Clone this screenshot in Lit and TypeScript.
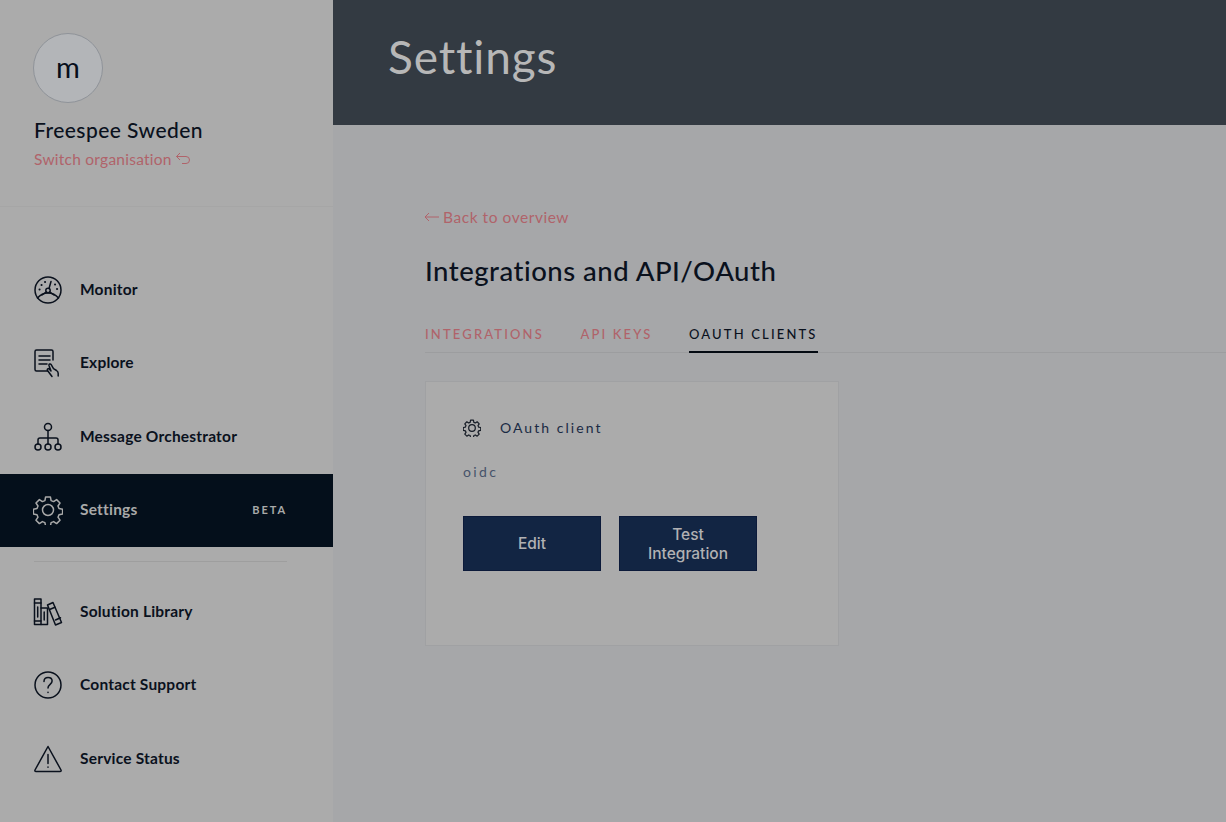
import { LitElement, html, css, svg } from "lit";
import { customElement } from "lit/decorators.js";

const ic = (body: unknown, size = 30, sw = 1.5) => html`<svg class="icon" width=${size} height=${size} viewBox="0 0 30 30" fill="none" stroke="currentColor" stroke-width=${sw} stroke-linecap="round" stroke-linejoin="round">${body}</svg>`;

const gearPath = svg`<path d="M12.6 2h4.800l.7 3.600 2.500 1 3-2 3.400 3.400-2 3 1 2.500 3.600.7v4.800l-3.600.7-1 2.500 2 3-3.400 3.400-3-2-2.500 1-.7 3.600h-4.800l-.7-3.600-2.500-1-3 2-3.400-3.400 2-3-1-2.500-3.600-.7v-4.800l3.600-.7 1-2.500-2-3 3.400-3.400 3 2 2.500-1z"/><circle cx="15" cy="15" r="5.500"/>`;

const icons = {
  monitor: ic(svg`<circle cx="15" cy="15" r="13"/><path d="M4.500 23c2.800-3.300 6.300-5 10.500-5s7.700 1.700 10.500 5"/><circle cx="15" cy="15.500" r="2.200"/><path d="M16 13.500 18 6.500"/><path d="M13.200 17 9 20M16.800 17 21 20"/><path d="M6.500 14.500h.1M8.500 10h.1M12 7h.1M22 9.500h.1M24 14h.1" stroke-width="2"/>`),
  explore: ic(svg`<path d="M14.500 23H3.500A1.500 1.500 0 0 1 2 21.500V3.500A1.500 1.500 0 0 1 3.500 2h15A1.500 1.500 0 0 1 20 3.500V12"/><path d="M6 8h11M6 12h11M6 16h8"/><path d="M19 28.500l-4.500-6c-.9-1.300.9-2.600 2-1.300l1.500 1.800-2-5.500c-.5-1.500 1.500-2 2.200-.8l2.300 4 3 1.800c1 .7 1.700 1.700 1.700 3V28"/>`),
  orchestrator: ic(svg`<circle cx="15" cy="5" r="3.500"/><path d="M15 8.500V22M15 16H7a2 2 0 0 0-2 2v4M15 16h8a2 2 0 0 1 2 2v4"/><circle cx="5" cy="25" r="3"/><circle cx="15" cy="25" r="3"/><circle cx="25" cy="25" r="3"/>`),
  gear: ic(gearPath),
  library: ic(svg`<rect x="1.500" y="2" width="6.500" height="25.500"/><path d="M1.500 6H8M1.500 24H8M4.700 10v10"/><path d="M8 11h6.500v16.500H8M11.200 15v8"/><path d="M14.500 8 20 5.500l8.500 20-6 2.500z"/><path d="M16.500 12.500l5.500-2.300M22.500 23l5-2.300"/>`),
  help: ic(svg`<circle cx="15" cy="15" r="13"/><path d="M11 11.500c0-2.400 1.800-4 4.100-4 2.300 0 4 1.500 4 3.600 0 3.300-4.100 3.400-4.100 7"/><path d="M15 22.300v.2"/>`),
  warning: ic(svg`<path d="M15 2.500 28 26c.4.800 0 1.500-1 1.500H3c-1 0-1.400-.7-1-1.500z"/><path d="M15 10.500v9M15 23v.3"/>`),
};

@customElement("app-root")
export class AppRoot extends LitElement {
  static styles = css`
    :host { display: block; width: 1226px; height: 822px; overflow: hidden; font-family: "Lato", "Open Sans", sans-serif; }
    .page { display: flex; height: 822px; background: #a6a7a9; }
    .side { width: 333px; flex: none; background: #ababab; display: flex; flex-direction: column; box-sizing: border-box; }
    .org { height: 207px; flex: none; box-sizing: border-box; padding: 33px 0 0 33px; border-bottom: 1px solid #a6a6a6; }
    .avatar { width: 68px; height: 65px; border-radius: 50%; background: #b3b5b8; border: 1px solid #8f9399; display: flex; align-items: center; justify-content: center; font-size: 29px; line-height: 1; color: #060e1a; padding-bottom: 3px; box-sizing: content-box; }
    .org-name { margin: 14px 0 0 1px; font-size: 21px; line-height: 26px; font-weight: 500; color: #0a111d; letter-spacing: 0.45px; }
    .switch { display: flex; align-items: center; gap: 3px; margin: 6px 0 0 1px; font-size: 15.500px; line-height: 20px; color: #b0636a; letter-spacing: 0.25px; }
    .nav { margin-top: 46px; display: flex; flex-direction: column; }
    .item { height: 73.500px; display: flex; align-items: center; padding: 0 46px 0 33px; color: #0a111d; font-size: 15.500px; font-weight: 700; letter-spacing: 0.2px; }
    .item .icon { margin-right: 17px; flex: none; }
    .item > span { padding-bottom: 2px; }
    .item.active { background: #040f1b; color: #a9a9a9; }
    .beta { margin-left: auto; font-size: 11px; letter-spacing: 1.900px; font-weight: 700; }
    .sep { height: 1px; background: #9e9e9e; margin: 14px 46px 13px 34px; }
    .main { flex: 1; display: flex; flex-direction: column; min-width: 0; }
    .head { height: 125px; flex: none; background: #333a42; color: #b7b7b7; display: flex; align-items: center; padding: 0 0 13px 55px; box-sizing: border-box; font-size: 46px; font-weight: 400; letter-spacing: 0.85px; }
    .body { padding: 82px 0 0 92px; }
    .back { display: flex; align-items: center; gap: 4px; font-size: 15.500px; line-height: 20px; color: #b0636a; letter-spacing: 0.55px; }
    .back svg { margin-left: -1px; }
    h1 { margin: 24px 0 0; font-size: 27.500px; line-height: 39px; font-weight: 500; color: #0a111d; letter-spacing: 0.5px; }
    .tabs { display: flex; gap: 36.500px; margin-top: 24px; border-bottom: 1px solid #9c9d9f; height: 39px; box-sizing: border-box; }
    .tab { font-size: 13px; line-height: 20px; letter-spacing: 2.150px; color: #b0636a; font-weight: 500; padding-top: 10px; box-sizing: border-box; height: 39px; }
    .tab.on { color: #0a111d; border-bottom: 2px solid #040a12; }
    .card { margin-top: 28px; width: 414px; height: 265px; box-sizing: border-box; background: #ababab; border: 1px solid #a0a1a3; padding: 36px 37px; }
    .card-head { display: flex; align-items: center; gap: 19px; font-size: 14px; line-height: 20px; letter-spacing: 2.050px; color: #1a2a44; }
    .card-head .icon { flex: none; color: #141a24; }
    .oidc { margin-top: 24px; font-size: 14px; line-height: 20px; letter-spacing: 2.400px; color: #46536a; }
    .btns { display: flex; gap: 18px; margin-top: 34px; }
    button { width: 138px; height: 55px; box-sizing: border-box; background: #122543; border: 1px solid #0c1a3a; color: #b1b1b3; font-family: "Inter", sans-serif; font-size: 15.500px; line-height: 19.500px; font-weight: 500; padding: 1px 20px 0; }
  `;

  private row(icon: unknown, label: string) {
    return html`<div class="item">${icon}<span>${label}</span></div>`;
  }

  render() {
    return html`<div class="page">
      <aside class="side">
        <div class="org">
          <div class="avatar">m</div>
          <div class="org-name">Freespee Sweden</div>
          <div class="switch">Switch organisation
            <svg width="16" height="14" viewBox="0 0 16 14" fill="none" stroke="currentColor" stroke-width="1"><path d="M5 1 1.500 4.500 5 8M1.500 4.500H11a3.500 3.500 0 0 1 0 7H7"/></svg>
          </div>
        </div>
        <nav class="nav">
          ${this.row(icons.monitor, "Monitor")}
          ${this.row(icons.explore, "Explore")}
          ${this.row(icons.orchestrator, "Message Orchestrator")}
          <div class="item active">${icons.gear}<span>Settings</span><span class="beta">BETA</span></div>
          <div class="sep"></div>
          ${this.row(icons.library, "Solution Library")}
          ${this.row(icons.help, "Contact Support")}
          ${this.row(icons.warning, "Service Status")}
        </nav>
      </aside>
      <main class="main">
        <header class="head">Settings</header>
        <section class="body">
          <div class="back">
            <svg width="15" height="10" viewBox="0 0 15 10" fill="none" stroke="currentColor" stroke-width="1"><path d="M5 1 1 5l4 4M1 5h14"/></svg>
            Back to overview
          </div>
          <h1>Integrations and API/OAuth</h1>
          <div class="tabs">
            <div class="tab">INTEGRATIONS</div>
            <div class="tab">API KEYS</div>
            <div class="tab on">OAUTH CLIENTS</div>
          </div>
          <div class="card">
            <div class="card-head">${ic(gearPath, 18, 2)}<span>OAuth client</span></div>
            <div class="oidc">oidc</div>
            <div class="btns"><button>Edit</button><button>Test Integration</button></div>
          </div>
        </section>
      </main>
    </div>`;
  }
}
